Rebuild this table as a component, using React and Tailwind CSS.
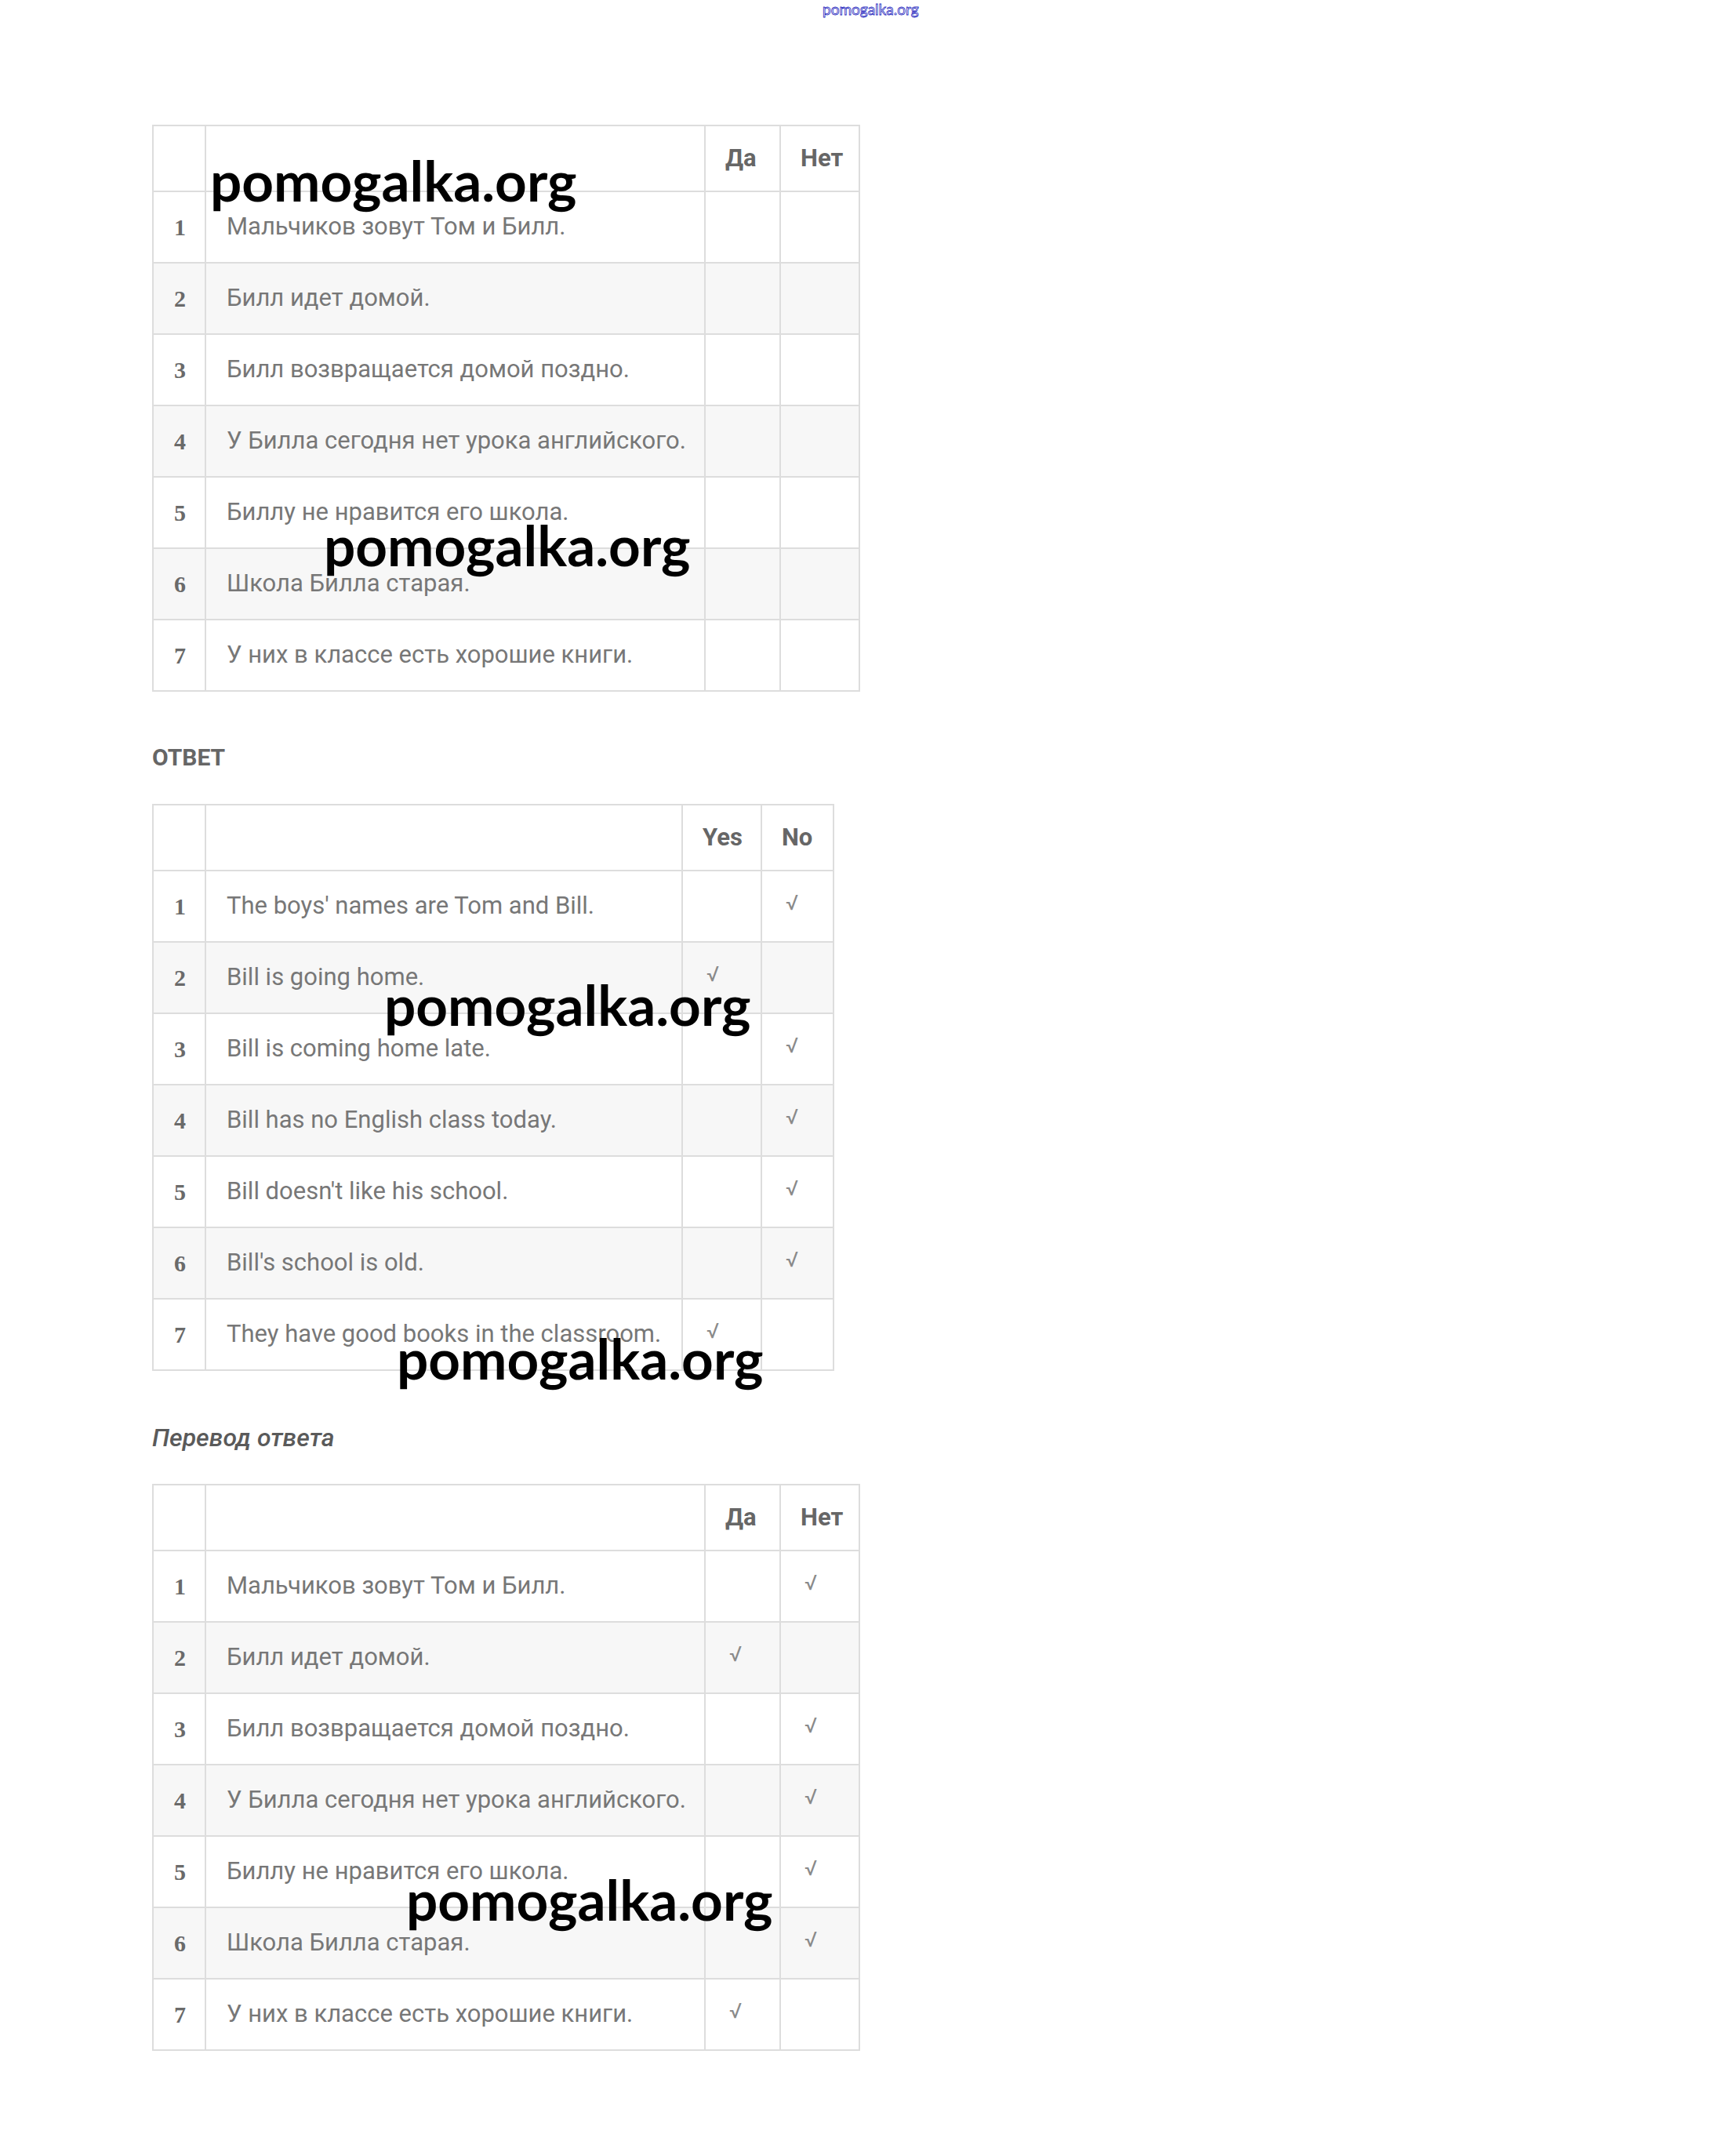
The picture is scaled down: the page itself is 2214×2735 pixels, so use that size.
import React from 'react';

const RU = [
  'Мальчиков зовут Том и Билл.',
  'Билл идет домой.',
  'Билл возвращается домой поздно.',
  'У Билла сегодня нет урока английского.',
  'Биллу не нравится его школа.',
  'Школа Билла старая.',
  'У них в классе есть хорошие книги.',
];

const EN = [
  'The boys\' names are Tom and Bill.',
  'Bill is going home.',
  'Bill is coming home late.',
  'Bill has no English class today.',
  'Bill doesn\'t like his school.',
  'Bill\'s school is old.',
  'They have good books in the classroom.',
];

// 1 = yes, 0 = no
const ANSWERS = [0, 1, 0, 0, 0, 0, 1];

const Cell = ({ className = '', children }) => (
  <div className={`flex items-center border-r-2 border-[#dddddd] ${className}`}>{children}</div>
);

const QuizTable = ({ rows, yes, no, answers, cols }) => (
  <div className="border-2 border-[#dddddd] w-fit font-['Roboto',sans-serif]">
    {/* шапка */}
    <div className={`grid ${cols} h-[82px] bg-white`}>
      <Cell />
      <Cell />
      <Cell className="pl-[25px] text-[31px] font-bold text-[#666666]">{yes}</Cell>
      <div className="flex items-center pl-[25px] text-[31px] font-bold text-[#666666]">{no}</div>
    </div>
    {rows.map((text, i) => (
      <div
        key={i}
        className={`grid ${cols} h-[91px] border-t-2 border-[#dddddd] ${i % 2 === 1 ? 'bg-[#f7f7f7]' : 'bg-white'}`}
      >
        <Cell className="justify-center pl-[2px] font-['Liberation_Serif',serif] font-bold text-[30px] text-[#6a6a6a]">
          {i + 1}
        </Cell>
        <Cell className="pl-[26px] text-[31px] text-[#777777] whitespace-nowrap">{text}</Cell>
        <Cell className="pl-[30px] text-[27px] text-[#8a8a8a] -mt-[8px]">
          {answers && answers[i] === 1 ? '√' : ''}
        </Cell>
        <div className="flex items-center pl-[30px] text-[27px] text-[#8a8a8a] -mt-[8px]">
          {answers && answers[i] === 0 ? '√' : ''}
        </div>
      </div>
    ))}
  </div>
);

const Watermark = ({ className }) => (
  <div className={`absolute font-['Lato',sans-serif] font-bold text-[71px] leading-none text-black whitespace-nowrap ${className}`}>
    pomogalka.org
  </div>
);

export default function App() {
  const ruCols = 'grid-cols-[67px_637px_96px_99px]';
  const enCols = 'grid-cols-[67px_608px_101px_90px]';

  return (
    <div className="relative min-h-[2735px] w-[2214px] bg-white">
      {/* маленькая надпись сверху */}
      <div className="absolute left-[1049px] top-[2px] font-['Lato',sans-serif] text-[19px] leading-none text-transparent [-webkit-text-stroke:0.8px_#2a2ac0] whitespace-nowrap">
        pomogalka.org
      </div>

      <div className="pt-[159px] pl-[194px]">
        <QuizTable rows={RU} yes="Да" no="Нет" cols={ruCols} />

        <div className="mt-[69px] font-['Roboto',sans-serif] font-bold text-[30px] leading-none text-[#666666]">
          ОТВЕТ
        </div>

        <div className="mt-[44px]">
          <QuizTable rows={EN} yes="Yes" no="No" answers={ANSWERS} cols={enCols} />
        </div>

        <div className="mt-[69px] font-['Roboto',sans-serif] italic font-medium text-[32px] leading-none text-[#5a5a5a]">
          Перевод ответа
        </div>

        <div className="mt-[43px]">
          <QuizTable rows={RU} yes="Да" no="Нет" answers={ANSWERS} cols={ruCols} />
        </div>
      </div>

      {/* водяные знаки */}
      <Watermark className="left-[268px] top-[194px]" />
      <Watermark className="left-[413px] top-[659px]" />
      <Watermark className="left-[490px] top-[1245px]" />
      <Watermark className="left-[506px] top-[1696px]" />
      <Watermark className="left-[518px] top-[2386px]" />
    </div>
  );
}
